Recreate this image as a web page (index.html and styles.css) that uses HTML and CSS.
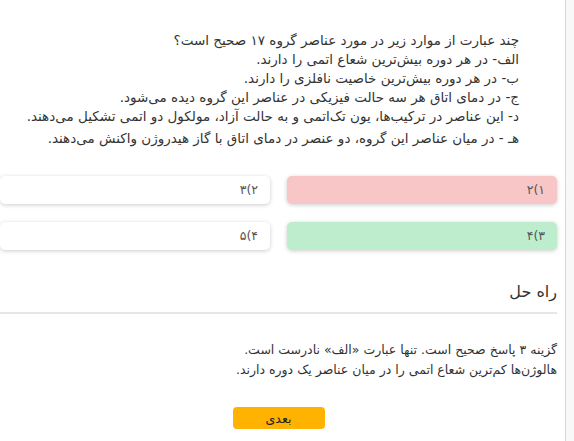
FILE: index.html
```html
<!DOCTYPE html>
<html lang="fa" dir="rtl">
<head>
<meta charset="utf-8">
<link rel="stylesheet" href="styles.css">
</head>
<body>
<div class="page">
  <main class="panel">
    <div class="question">
      <p class="q-line">چند عبارت از موارد زیر در مورد عناصر گروه ۱۷ صحیح است؟</p>
      <p class="q-line">الف- در هر دوره بیش‌ترین شعاع اتمی را دارند.</p>
      <p class="q-line">ب- در هر دوره بیش‌ترین خاصیت نافلزی را دارند.</p>
      <p class="q-line">ج- در دمای اتاق هر سه حالت فیزیکی در عناصر این گروه دیده می‌شود.</p>
      <p class="q-line">د- این عناصر در ترکیب‌ها، یون تک‌اتمی و به حالت آزاد، مولکول دو اتمی تشکیل می‌دهند.</p>
      <p class="q-line q-last">هـ - در میان عناصر این گروه، دو عنصر در دمای اتاق با گاز هیدروژن واکنش می‌دهند.</p>
    </div>
    <div class="options">
      <div class="option wrong">۱)۲</div>
      <div class="option">۲)۳</div>
      <div class="option right">۳)۴</div>
      <div class="option">۴)۵</div>
    </div>
    <h2 class="sol-title">راه حل</h2>
    <div class="solution">
      <p>گزینه ۳ پاسخ صحیح است. تنها عبارت «الف» نادرست است.</p>
      <p>هالوژن‌ها کم‌ترین شعاع اتمی را در میان عناصر یک دوره دارند.</p>
    </div>
    <div class="actions">
      <button class="next" type="button">بعدی</button>
    </div>
  </main>
  <div class="side"></div>
</div>
</body>
</html>
```
FILE: styles.css
```css
html, body {
  margin: 0;
  padding: 0;
  background: #f8f8f8;
}
body {
  font-family: "DejaVu Sans", sans-serif;
  font-size: 13.5px;
  color: #333;
  overflow: hidden;
}
.page {
  display: flex;
  flex-direction: row;
  direction: ltr;
  height: 441px;
}
.panel {
  direction: rtl;
  width: 557px;
  flex: none;
  background: #fff;
  border-right: 1px solid #d9d9d9;
  padding: 0 8px 0 0;
  box-sizing: content-box;
}
.side {
  flex: 1;
  background: #f8f8f8;
}
.question {
  padding: 31px 38px 0 0;
}
.q-line {
  margin: 0;
  line-height: 19px;
}
.q-last {
  margin-top: 3px;
}
.options {
  display: grid;
  grid-template-columns: 270px 270px;
  column-gap: 17px;
  row-gap: 18px;
  margin-top: 28px;
}
.option {
  height: 28px;
  line-height: 28px;
  font-size: 12.5px;
  background: #fff;
  border-radius: 5px;
  box-shadow: 0 1px 4px rgba(0, 0, 0, 0.2);
  padding-right: 12px;
  color: #555;
}
.option.wrong {
  background: #f8c6c6;
}
.option.right {
  background: #bdedcd;
}
.sol-title {
  margin: 30px 0 0;
  font-size: 16px;
  font-weight: normal;
  line-height: 24px;
  padding-bottom: 8px;
  border-bottom: 2px solid #e5e5ea;
  color: #333;
}
.solution {
  padding-top: 26px;
  font-size: 12.5px;
}
.solution p {
  margin: 0;
  line-height: 20px;
}
.actions {
  display: flex;
  justify-content: center;
  padding-top: 27px;
}
.next {
  width: 92px;
  height: 22px;
  border: none;
  border-radius: 4px;
  background: #ffb300;
  font-family: "DejaVu Sans", sans-serif;
  font-size: 12.5px;
  color: #222;
  padding: 0;
}
```
